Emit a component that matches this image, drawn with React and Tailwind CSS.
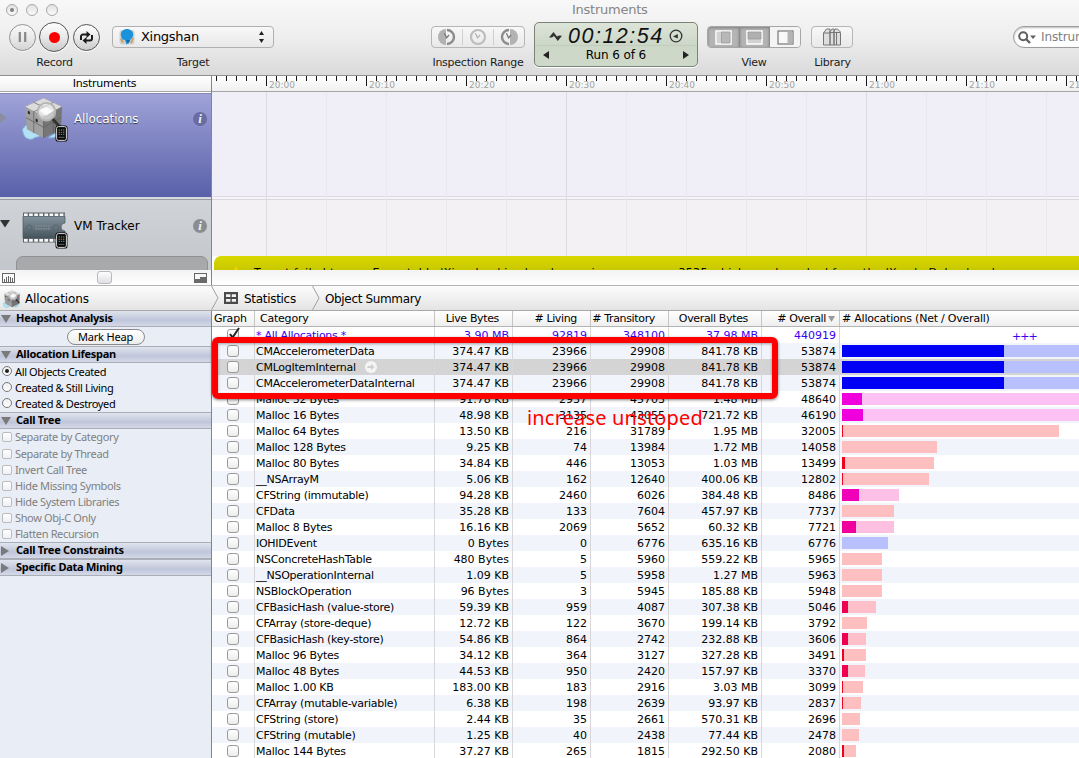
import React from "react";

const BLUE = ["bg-[#0000f5]", "bg-[#b8c1fd]"];
const MAGENTA = ["bg-[#f000dc]", "bg-[#fdc1f4]"];
const ORCHID = ["bg-[#f000b8]", "bg-[#fdc1e8]"];
const PINK = ["bg-[#f0009c]", "bg-[#fec0e0]"];
const ROSE = ["bg-[#f00050]", "bg-[#febfc8]"];
const RED = ["bg-[#f0001c]", "bg-[#febfc0]"];

const rows = [
  ["* All Allocations *", "3.90 MB", "92819", "348100", "37.98 MB", "440919"],
  ["CMAccelerometerData", "374.47 KB", "23966", "29908", "841.78 KB", "53874", 162, 300, BLUE],
  ["CMLogItemInternal", "374.47 KB", "23966", "29908", "841.78 KB", "53874", 162, 300, BLUE],
  ["CMAccelerometerDataInternal", "374.47 KB", "23966", "29908", "841.78 KB", "53874", 162, 300, BLUE],
  ["Malloc 32 Bytes", "91.78 KB", "2937", "45703", "1.48 MB", "48640", 20, 300, MAGENTA],
  ["Malloc 16 Bytes", "48.98 KB", "3135", "43055", "721.72 KB", "46190", 21, 300, MAGENTA],
  ["Malloc 64 Bytes", "13.50 KB", "216", "31789", "1.95 MB", "32005", 1, 217, RED],
  ["Malloc 128 Bytes", "9.25 KB", "74", "13984", "1.72 MB", "14058", 0, 95, RED],
  ["Malloc 80 Bytes", "34.84 KB", "446", "13053", "1.03 MB", "13499", 3, 91.5, RED],
  ["__NSArrayM", "5.06 KB", "162", "12640", "400.06 KB", "12802", 1, 87, RED],
  ["CFString (immutable)", "94.28 KB", "2460", "6026", "384.48 KB", "8486", 16.5, 57.3, ORCHID],
  ["CFData", "35.28 KB", "133", "7604", "457.97 KB", "7737", 0, 51.7, RED],
  ["Malloc 8 Bytes", "16.16 KB", "2069", "5652", "60.32 KB", "7721", 14, 52.3, PINK],
  ["IOHIDEvent", "0 Bytes", "0", "6776", "635.16 KB", "6776", 0, 46, BLUE],
  ["NSConcreteHashTable", "480 Bytes", "5", "5960", "559.22 KB", "5965", 0, 40.4, RED],
  ["__NSOperationInternal", "1.09 KB", "5", "5958", "1.27 MB", "5963", 0, 40.4, RED],
  ["NSBlockOperation", "96 Bytes", "3", "5945", "185.88 KB", "5948", 0, 40.4, RED],
  ["CFBasicHash (value-store)", "59.39 KB", "959", "4087", "307.38 KB", "5046", 6.4, 34, ROSE],
  ["CFArray (store-deque)", "12.72 KB", "122", "3670", "199.14 KB", "3792", 0, 25, RED],
  ["CFBasicHash (key-store)", "54.86 KB", "864", "2742", "232.88 KB", "3606", 6, 24.4, ROSE],
  ["Malloc 96 Bytes", "34.12 KB", "364", "3127", "327.28 KB", "3491", 2, 23.6, RED],
  ["Malloc 48 Bytes", "44.53 KB", "950", "2420", "157.97 KB", "3370", 6, 23, ROSE],
  ["Malloc 1.00 KB", "183.00 KB", "183", "2916", "3.03 MB", "3099", 1, 21, RED],
  ["CFArray (mutable-variable)", "6.38 KB", "198", "2639", "93.97 KB", "2837", 1, 19, RED],
  ["CFString (store)", "2.44 KB", "35", "2661", "570.31 KB", "2696", 0, 18, RED],
  ["CFString (mutable)", "1.25 KB", "40", "2438", "77.44 KB", "2478", 0, 16.7, RED],
  ["Malloc 144 Bytes", "37.27 KB", "265", "1815", "292.50 KB", "2080", 1.5, 14, RED],
];

function Label({ children }) {
  return <div className="whitespace-nowrap pt-px text-center text-[11px] leading-[14px] tracking-[-0.25px] text-[#1c1c1c]">{children}</div>;
}

function RoundButton({ size, children }) {
  return (
    <div className={`${size} flex shrink-0 items-center justify-center rounded-full border border-[#555] bg-gradient-to-b from-[#fdfdfd] via-[#e9e9e9] to-[#c9c9c9] shadow-[0_1px_0_#fff]`}>
      {children}
    </div>
  );
}

function Clock({ side }) {
  const c = side ? "#8c8c8c" : "#bdbdbd";
  return (
    <svg width="18" height="18" viewBox="0 0 18 18" fill="none" stroke={c}>
      {side === "left" && <path d="M8 1A8 8 0 0 0 8 17Z" fill="#b2b2b2" stroke="none" />}
      {side === "right" && <path d="M10 1A8 8 0 0 1 10 17Z" fill="#b2b2b2" stroke="none" />}
      {side === "left" ? <path d="M9 2A7 7 0 0 1 9 16" strokeWidth="2.4" /> : side === "right" ? <path d="M9 2A7 7 0 0 0 9 16" strokeWidth="2.4" /> : <circle cx="9" cy="9" r="7" strokeWidth="2.2" />}
      <path d="M6.4 5.2L8.6 9.8L11 7" strokeWidth="1.3" stroke={side ? "#777" : "#b4b4b4"} />
    </svg>
  );
}

function Phone() {
  return (
    <svg className="absolute bottom-0 right-0" width="13" height="17" viewBox="0 0 13 17">
      <rect x=".5" y=".5" width="12" height="16" rx="2.6" fill="#0b0b0b" />
      <rect x="1.6" y="1.6" width="9.8" height="13.8" rx="1.8" fill="#0b0b0b" stroke="#efefef" strokeWidth=".9" />
      <path d="M3.6 5h1.4M5.8 5h1.4M8 5h1.4" stroke="#6a5" strokeWidth="1.1" />
      <path d="M3.6 7.2h1.4M5.8 7.2h1.4M8 7.2h1.4" stroke="#c74" strokeWidth="1.1" />
      <path d="M3.6 9.4h1.4M5.8 9.4h1.4M8 9.4h1.4" stroke="#47a" strokeWidth="1.1" />
      <path d="M3.6 12.4h5.8" stroke="#555" strokeWidth="1.2" />
    </svg>
  );
}

function Cube({ size }) {
  return (
    <svg width={size} height={size} viewBox="0 0 44 44">
      <path d="M1 36c-2-4 2-5 3-7 3-1 3 3 6 2 4 0 4 5 9 7 0 4-6 2-8 5-4 1-9-1-10-7zM27 42c3-4 8-4 12-9 2 5-2 9-12 9z" fill="#b4e0f4" stroke="#78b4d4" strokeWidth=".8" />
      <path d="M22 1L41 10 22 20 3 10Z" fill="#dcdcdc" stroke="#aaa" strokeWidth=".6" />
      <path d="M3 10L22 20V42L5 33Z" fill="#a0a0a0" />
      <path d="M41 10L22 20V42L40 33Z" fill="#767676" />
      <path d="M12 5.5L32 15V38M32 5.5L12 15V37M4 21L22 31 40 21M22 20V42" stroke="#5c5c5c" strokeWidth=".7" fill="none" />
      <path d="M6 14l2 1v3l-2-1zM14 22l2 1v3l-2-1z" fill="#222" />
      <path d="M31 22L39 31" stroke="#333" strokeWidth="3" strokeLinecap="round" />
      <circle cx="25" cy="15" r="9" fill="#e8e8e8" fillOpacity=".7" stroke="#b4b4b4" strokeWidth="2" />
      <path d="M18 14l6-4 8 4-7 5z" fill="#fff" fillOpacity=".85" />
    </svg>
  );
}

function Chip() {
  return (
    <svg width="44" height="32" viewBox="0 0 44 32">
      <defs>
        <linearGradient id="chip" x1="0" y1="0" x2="0" y2="1">
          <stop offset="0" stopColor="#82929c" />
          <stop offset="1" stopColor="#44525b" />
        </linearGradient>
      </defs>
      <path d="M1 2.6h42M1 28.6h42" stroke="#5c6468" strokeWidth="4" />
      <path d="M2 3h41M2 28.2h41" stroke="#f8f8f8" strokeWidth="3.2" strokeDasharray="3.7 1.4" />
      <path d="M1 4.5H43V11a4 4 0 0 0 0 8V26.5H1Z" fill="url(#chip)" stroke="#4c5860" strokeWidth=".7" />
      <circle cx="7" cy="15.5" r="2.6" fill="#66747d" stroke="#55626a" strokeWidth=".8" />
      <circle cx="34" cy="15.5" r="2.6" fill="#66747d" stroke="#55626a" strokeWidth=".8" />
      <path d="M13 14h15M13 16.8h15" stroke="#83919a" strokeWidth="1.2" strokeDasharray="2 .6" />
    </svg>
  );
}

function Info({ tone }) {
  return (
    <div className={`flex h-[14px] w-[14px] items-center justify-center rounded-full ${tone}`}>
      <span className="font-['Liberation_Serif',serif] text-[13px] font-bold italic leading-[14px] text-[#f0f0f4]">i</span>
    </div>
  );
}

function Toolbar() {
  return (
    <header className="flex h-[76px] shrink-0 flex-col border-b border-[#8f8f8f] bg-gradient-to-b from-[#f8f8f8] via-[#eeeeee] to-[#dadada]">
      <div className="flex h-[19px] shrink-0 items-center pl-[6px]">
        <div className="flex gap-2">
          {[0, 1, 2].map((i) => (
            <div key={i} className="flex h-3 w-3 items-center justify-center rounded-full border border-[#a8a8a8] bg-gradient-to-b from-[#e2e2e2] to-[#fafafa]">
              {i === 0 && <div className="h-1 w-1 rounded-full bg-[#808080]" />}
            </div>
          ))}
        </div>
        <div className="ml-[514px] whitespace-nowrap text-[13px] leading-[18px] tracking-[-0.25px] text-[#858585]">Instruments</div>
      </div>
      <div className="flex shrink-0">
        <div className="ml-[8px] w-[93px]">
          <div className="flex h-[36px] items-center pl-px">
            <div className="opacity-60">
              <RoundButton size="w-[27px] h-[27px]">
                <svg width="10" height="10" viewBox="0 0 10 10"><path d="M1.8 0v10M7.2 0v10" stroke="#444" strokeWidth="2.2" /></svg>
              </RoundButton>
            </div>
            <div className="ml-[3px] mr-[4px]">
              <RoundButton size="w-[30px] h-[30px]">
                <div className="h-[11px] w-[11px] rounded-full bg-[#fa0000]" />
              </RoundButton>
            </div>
            <RoundButton size="w-[27px] h-[27px]">
              <svg width="15" height="13" viewBox="0 0 15 13" fill="none" stroke="#1a1a1a" strokeWidth="2">
                <path d="M2 9V5.5A2 2 0 0 1 4 3.5H8M13 4V7.5A2 2 0 0 1 11 9.5H7" />
                <path d="M7.5 0L11.5 3.5 7.5 7ZM7.5 6L3.5 9.5 7.5 13Z" fill="#1a1a1a" stroke="none" />
              </svg>
            </RoundButton>
          </div>
          <Label>Record</Label>
        </div>
        <div className="ml-[11px] w-[162px]">
          <div className="flex h-[36px] items-center">
            <div className="flex h-[22px] w-full items-center rounded-[4px] border border-[#b0b0b0] bg-gradient-to-b from-[#f8f8f8] to-[#e9e9e9] pl-[6px] pr-[9px]">
              <svg width="16" height="16" viewBox="0 0 16 16">
                <rect x=".5" y="1" width="15" height="14.5" rx="3" fill="#cfcfcb" />
                <path d="M2 9.5l2 4M14 9l-2 5" stroke="#c8a070" strokeWidth="2" />
                <path d="M2 7C1 2 5 0 8 0s7 2 6 7c-1 3-3 3-3 5 0 2-3 1-3 4-1-1-1-3-2-5C4 11 3 10 2 7z" fill="#1b92dc" />
                <path d="M7 11h4l-2 4z" fill="#0c6ab0" />
              </svg>
              <span className="ml-[6px] text-[13px] leading-[20px] tracking-[-0.3px] text-black">Xingshan</span>
              <svg className="ml-auto" width="5" height="12" viewBox="0 0 5 12"><path d="M2.5 0L5 4H0ZM2.5 12L5 8H0Z" fill="#222" /></svg>
            </div>
          </div>
          <Label>Target</Label>
        </div>
        <div className="ml-[157px] w-[94px]">
          <div className="flex h-[36px] items-center">
            <div className="flex h-[22px] w-full items-center rounded-[4px] border border-[#b6b6b6] bg-gradient-to-b from-[#f8f8f8] to-[#e9e9e9]">
              <div className="flex flex-1 justify-center"><Clock side="left" /></div>
              <div className="flex h-[16px] flex-1 items-center justify-center border-x border-[#cfcfcf]"><Clock /></div>
              <div className="flex flex-1 justify-center"><Clock side="right" /></div>
            </div>
          </div>
          <Label>Inspection Range</Label>
        </div>
        <div className="ml-[9px] mt-[3px] flex h-[45px] w-[164px] flex-col rounded-[5px] border border-[#7b8378] bg-gradient-to-b from-[#dce5d8] from-0% via-[#cdd7c8] via-50% to-[#cfd9c9] shadow-[0_1px_0_#fff]">
          <div className="flex h-[23px] shrink-0 items-center border-b border-[#c2ccbd] pt-[4px]">
            <svg className="ml-[14px]" width="13" height="9" viewBox="0 0 13 9"><path d="M0 5.5L4.5 0 8 4.5 10 3.5 13 3.8 8.8 9 5 4 3 5.5Z" fill="#333" /></svg>
            <div className="ml-[6px] flex w-[95px] font-['Liberation_Sans',sans-serif] text-[21.5px] italic leading-[20px] tracking-[1.5px] text-[#111]">00:12:54</div>
            <svg className="ml-[6px]" width="14" height="14" viewBox="0 0 14 14"><circle cx="7" cy="7" r="5.8" fill="none" stroke="#333" strokeWidth="1.3" /><path d="M4 7.5L8.8 5V9.5Z" fill="#333" /></svg>
          </div>
          <div className="flex h-[17px] items-center justify-between px-[8px]">
            <svg width="6" height="8" viewBox="0 0 6 8"><path d="M6 0V8L0 4Z" fill="#222" /></svg>
            <span className="text-[12px] leading-[16px] tracking-[-0.1px] text-black">Run 6 of 6</span>
            <svg width="6" height="8" viewBox="0 0 6 8"><path d="M0 0V8L6 4Z" fill="#222" /></svg>
          </div>
        </div>
        <div className="ml-[9px] w-[94px]">
          <div className="flex h-[36px] items-center">
            <div className="flex h-[22px] w-full overflow-hidden rounded-[4px] border border-[#a6a6a6]">
              <div className="flex w-[31px] items-center justify-center bg-[#b4b4b4] shadow-[inset_0_1px_3px_#808080]">
                <svg width="17" height="15" viewBox="0 0 17 15"><rect x="1" y="1" width="15" height="13" fill="#b5b5b5" stroke="#fff" strokeWidth="1.5" /><path d="M2 2h4v11H2z" fill="#d2d2d2" /><path d="M6.5 2h8.5v11H6.5z" fill="#b8b8b8" stroke="#999" strokeWidth=".7" /></svg>
              </div>
              <div className="flex w-[31px] items-center justify-center border-x border-[#8b8b8b] bg-[#b4b4b4] shadow-[inset_0_1px_3px_#808080]">
                <svg width="17" height="15" viewBox="0 0 17 15"><rect x="1" y="1" width="15" height="13" fill="#d2d2d2" stroke="#fff" strokeWidth="1.5" /><path d="M2 2h13v7H2z" fill="#b0b0b0" stroke="#999" strokeWidth=".7" /></svg>
              </div>
              <div className="flex flex-1 items-center justify-center bg-[#f4f4f4]">
                <svg width="17" height="15" viewBox="0 0 17 15"><rect x="1" y="1" width="15" height="13" fill="#f8f8f8" stroke="#777" strokeWidth="1.2" /><path d="M10.5 1.5h5v12h-5z" fill="#b4b4b4" /></svg>
              </div>
            </div>
          </div>
          <Label>View</Label>
        </div>
        <div className="ml-[10px] w-[43px]">
          <div className="flex h-[36px] items-center">
            <div className="flex h-[22px] w-[42px] items-center justify-center rounded-[4px] border border-[#b6b6b6] bg-gradient-to-b from-[#f8f8f8] to-[#e9e9e9]">
              <svg width="20" height="18" viewBox="0 0 20 18" fill="#dedede" stroke="#777" strokeWidth="1">
                <path d="M1.5 5L4.5 1H8V5M7.5 4.5L10 1H12V5M11.5 4.5L13 1H15.5L18.5 4" />
                <path d="M1.5 5H8V17H1.5ZM8 4.5H12V17H8ZM12 4.5H18.5V17H12ZM14.5 4.5V17" />
              </svg>
            </div>
          </div>
          <Label>Library</Label>
        </div>
        <div className="ml-[159px] flex h-[36px] w-[66px] items-center overflow-hidden">
          <div className="flex h-[22px] w-[120px] shrink-0 items-center rounded-full border border-[#9c9c9c] bg-white pl-[4px] shadow-[inset_0_1px_2px_#bbb]">
            <svg width="18" height="13" viewBox="0 0 18 13" fill="none" stroke="#606060"><circle cx="5.2" cy="5.2" r="4" strokeWidth="2" /><path d="M8 8L12 12" strokeWidth="2.4" /><path d="M12 4.5H18L15 8Z" fill="#606060" stroke="none" /></svg>
            <span className="ml-[5px] text-[12px] leading-[18px] tracking-[-0.1px] text-[#808080]">Instrument</span>
          </div>
        </div>
      </div>
    </header>
  );
}

function Ruler() {
  const ticks = Array.from({ length: 87 }, (_, i) => i);
  const labels = ["20:00", "20:10", "20:20", "20:30", "20:40", "20:50", "21:00", "21:10", "21:20"];
  return (
    <div className="relative h-[16px] shrink-0 overflow-hidden border-b border-[#a5a5a5] bg-gradient-to-b from-white to-[#f0f0f0]">
      <div className="flex pl-[57px]">
        {labels.map((l) => (
          <span key={l} className="w-[100px] shrink-0 pt-[3px] text-[9px] leading-[12px] text-[#a2a2a2]">{l}</span>
        ))}
      </div>
      <svg className="absolute left-0 top-0" width="867" height="12">
        {ticks.map((i) => (
          <rect key={i} x={4 + i * 10} y="0" width="1" height={(i - 5) % 10 === 0 ? 10 : 5} fill="#151515" />
        ))}
      </svg>
    </div>
  );
}

function TrackGrid() {
  return (
    <svg className="absolute left-0 top-0" width="867" height="178">
      {Array.from({ length: 15 }, (_, i) => (
        <rect key={i} x={54 + i * 60} y="0" width="1" height="178" fill={i % 5 === 0 ? "#dddbe1" : "#eae8ed"} />
      ))}
    </svg>
  );
}

function Tracks() {
  return (
    <div className="flex h-[194px] shrink-0">
      <div className="flex w-[212px] shrink-0 flex-col border-r border-[#858585]">
        <div className="h-[16px] shrink-0 border-b border-[#a5a5a5] bg-gradient-to-b from-white to-[#f0f0f0] pr-[2px] text-center text-[11px] leading-[15px] tracking-[-0.25px] text-black">Instruments</div>
        <div className="mt-px flex h-[104px] shrink-0 items-start border-t border-[#8586b5] bg-gradient-to-b from-[#a0a3d8] to-[#5a60a8]">
          <svg className="mt-[19px]" width="7" height="10" viewBox="0 0 7 10"><path d="M0 0L7 5 0 10Z" fill="#8c8ca0" /></svg>
          <div className="relative ml-[15px] mt-[3px] h-[45px] w-[46px]"><Cube size={43} /><Phone /></div>
          <span className="ml-[6px] mt-[17px] text-[12px] leading-[16px] tracking-[-0.1px] text-white [text-shadow:0_1px_1px_#334]">Allocations</span>
          <div className="ml-auto mr-[4px] mt-[18px]"><Info tone="bg-[#686ca0]" /></div>
        </div>
        <div className="h-[3px] shrink-0 border-b border-[#9c9ca0] bg-[#d4dae4]" />
        <div className="flex flex-1 flex-col overflow-hidden bg-gradient-to-b from-[#d0d3d7] to-[#c3c7cb]">
          <div className="flex items-start">
            <svg className="mt-[20px]" width="10" height="8" viewBox="0 0 10 8"><path d="M0 0H10L5 7.5Z" fill="#333" /></svg>
            <div className="relative ml-[12px] mt-[12px] h-[37px] w-[46px]"><Chip /><Phone /></div>
            <span className="ml-[6px] mt-[18px] text-[12px] leading-[16px] text-black">VM Tracker</span>
            <div className="ml-auto mr-[4px] mt-[19px]"><Info tone="bg-[#8a8d90]" /></div>
          </div>
          <div className="ml-[16px] mr-[3px] mt-[7px] h-[30px] shrink-0 rounded-[7px] border border-[#8e9193] bg-[#a8a9ab]" />
        </div>
      </div>
      <div className="flex min-w-0 flex-1 flex-col">
        <Ruler />
        <div className="relative flex flex-1 flex-col overflow-hidden">
          <div className="h-[105px] shrink-0 border-b border-[#dedbe6] bg-[#f0eef6]" />
          <div className="h-[3px] shrink-0 border-b border-[#dbd8dd] bg-[#f6f4f8]" />
          <div className="h-[56px] shrink-0 bg-[#f3f1f3]" />
          <TrackGrid />
          <div className="relative -mr-2 ml-[2px] h-[40px] shrink-0 rounded-[7px] bg-gradient-to-b from-[#d9d900] to-[#a8a800]">
            <div className="flex items-start pt-[10px]">
              <svg className="ml-[17px]" width="10" height="9" viewBox="0 0 10 9"><path d="M5 0L10 9H0Z" fill="#f2d000" /></svg>
              <span className="ml-[13px] whitespace-nowrap text-[11px] leading-[14px] tracking-[0.32px] text-black">Target failed to run. Executable 'Xingshan' is already running as process 3535 which was launched from the 'Xcode Debug' and</span>
            </div>
          </div>
        </div>
      </div>
    </div>
  );
}

function Strip() {
  return (
    <div className="flex h-[16px] shrink-0 border-b border-[#b4b4b4] bg-gradient-to-b from-[#f3f3f3] to-white">
      <div className="flex w-[212px] items-center border-r border-[#858585] pl-[2px] pr-[4px]">
        <svg width="13" height="10" viewBox="0 0 13 10" fill="none" stroke="#666"><rect x=".5" y=".5" width="12" height="9" fill="#fafafa" /><path d="M2.5 9V6M4.5 9V4M6.5 9V3M8.5 9V4M10.5 9V5" /></svg>
        <div className="ml-[82px] h-[13px] w-[15px] rounded-[3px] border-[1.5px] border-[#b8b8c0] bg-gradient-to-b from-[#fdfdfd] to-[#e0e0e4]" />
        <svg className="ml-auto" width="13" height="10" viewBox="0 0 13 10"><rect x=".5" y=".5" width="12" height="9" fill="#f6f6f6" stroke="#666" /><path d="M0 6H6V4H13V10H0Z" fill="#6a6a6a" /></svg>
      </div>
    </div>
  );
}

function Chevron() {
  return <svg className="shrink-0" width="8" height="24" viewBox="0 0 8 24"><path d="M.5 0L7 12 .5 24" fill="none" stroke="#a0a0a0" /></svg>;
}

function Breadcrumb() {
  return (
    <div className="flex h-[25px] shrink-0 items-center border-b border-[#a9a9a9] bg-gradient-to-b from-[#fcfcfc] from-0% via-[#f0f0f0] via-50% to-[#e4e4e4] text-[12px] leading-[16px] text-black">
      <div className="flex w-[211px] shrink-0 items-center pl-[3px] pt-px">
        <Cube size={18} />
        <span className="ml-[4px] tracking-[-0.15px]">Allocations</span>
      </div>
      <Chevron />
      <svg className="ml-[5px]" width="14" height="12" viewBox="0 0 14 12"><rect width="14" height="12" fill="#4a4a4a" /><path d="M2 2.2h4.4v2.8H2zM7.8 2.2h4.2v2.8H7.8zM2 7h4.4v2.8H2zM7.8 7h4.2v2.8H7.8z" fill="#f2f2f2" /></svg>
      <span className="ml-[6px] w-[68px] pt-px tracking-[-0.3px]">Statistics</span>
      <Chevron />
      <span className="ml-[5px] pt-px tracking-[-0.35px]">Object Summary</span>
    </div>
  );
}

function SectionHead({ open, children }) {
  return (
    <div className="flex h-[16px] shrink-0 items-start border-b border-[#aaaeb6] bg-gradient-to-b from-[#e0e4ee] from-0% via-[#c0c6da] via-60% to-[#d4d9e8]">
      <div className="flex h-[15px] w-[16px] items-center pl-px">
        {open ? (
          <svg width="10" height="8" viewBox="0 0 10 8"><path d="M0 0H10L5 8Z" fill="#7a7a7a" /></svg>
        ) : (
          <svg width="8" height="10" viewBox="0 0 8 10"><path d="M0 0L8 5 0 10Z" fill="#7a7a7a" /></svg>
        )}
      </div>
      <span className="whitespace-nowrap font-['Noto_Sans',sans-serif] text-[11px] font-bold leading-[13px] tracking-[-0.25px] text-black">{children}</span>
    </div>
  );
}

function Sidebar() {
  return (
    <aside className="flex w-[212px] shrink-0 flex-col border-r border-[#858585] bg-[#e9eef6] font-['Noto_Sans',sans-serif] text-[11px] tracking-[-0.36px]">
      <SectionHead open>Heapshot Analysis</SectionHead>
      <div className="flex h-[20px] justify-center border-b border-[#aaaeb6] pt-[2px]">
        <div className="h-[16px] w-[78px] rounded-full border border-[#8a8a8a] bg-gradient-to-b from-white to-[#ececec] text-center leading-[14px] tracking-[-0.2px]">Mark Heap</div>
      </div>
      <SectionHead open>Allocation Lifespan</SectionHead>
      <div className="flex h-[50px] flex-col border-b border-[#aaaeb6]">
        {["All Objects Created", "Created & Still Living", "Created & Destroyed"].map((t, i) => (
          <div key={t} className="flex h-[16px] items-center pl-[2px]">
            <div className="flex h-[10px] w-[10px] items-center justify-center rounded-full border border-[#777] bg-gradient-to-b from-[#eee] to-white">
              {i === 0 && <div className="h-[4px] w-[4px] rounded-full bg-[#222]" />}
            </div>
            <span className="ml-[3px] pt-px leading-[15px] text-black">{t}</span>
          </div>
        ))}
      </div>
      <SectionHead open>Call Tree</SectionHead>
      <div className="flex h-[114px] flex-col border-b border-[#aaaeb6]">
        {["Separate by Category", "Separate by Thread", "Invert Call Tree", "Hide Missing Symbols", "Hide System Libraries", "Show Obj-C Only", "Flatten Recursion"].map((t) => (
          <div key={t} className="flex h-[16px] shrink-0 items-center pl-[2px] first:mb-px">
            <div className="h-[10px] w-[10px] rounded-[2px] border border-[#bcbcbc] bg-gradient-to-b from-white to-[#eef0f4]" />
            <span className="ml-[3px] pb-px leading-[15px] text-[#808080]">{t}</span>
          </div>
        ))}
      </div>
      <SectionHead>Call Tree Constraints</SectionHead>
      <div className="h-px shrink-0 bg-[#aaaeb6]" />
      <SectionHead>Specific Data Mining</SectionHead>
    </aside>
  );
}

const cell = "shrink-0 border-r border-[#d9d6da]";
const num = `${cell} pr-[3px] text-right`;
const head = "shrink-0 border-r border-[#c4c4c4] pr-[13px] text-right tracking-[-0.35px]";

function Row({ r, i }) {
  const bg = i === 2 ? "bg-[#d4d4d4]" : i % 2 ? "bg-[#f1f5fb]" : "bg-white";
  const color = i === 0 ? "text-[#3a00f0]" : "text-black";
  return (
    <div className={`flex h-[16px] shrink-0 whitespace-nowrap leading-[18px] ${bg} ${color}`}>
      <div className={`${cell} flex w-[43px] items-center pl-[15px]`}>
        <div className="h-[12px] w-[12px] rounded-[3px] border border-[#9a9a9a] bg-gradient-to-b from-white to-[#ececec]">
          {i === 0 && <svg className="-mt-[3px]" width="13" height="12" viewBox="0 0 13 12"><path d="M2 7L4.5 10.5 11 1" fill="none" stroke="#222" strokeWidth="2" /></svg>}
        </div>
      </div>
      <div className={`${cell} flex w-[180px] items-start pl-[1px] tracking-[-0.27px]`}>
        {r[0]}
        {i === 2 && (
          <svg className="ml-[9px] mt-[2px]" width="12" height="12" viewBox="0 0 12 12"><circle cx="6" cy="6" r="6" fill="#f4f4f4" /><path d="M2.5 5H6V2.8L9.5 6 6 9.2V7H2.5Z" fill="#d0d0d0" /></svg>
        )}
      </div>
      <div className={`${num} w-[78px]`}>{r[1]}</div>
      <div className={`${num} w-[78px]`}>{r[2]}</div>
      <div className={`${num} w-[78px]`}>{r[3]}</div>
      <div className={`${num} w-[93px]`}>{r[4]}</div>
      <div className={`${num} w-[78px]`}>{r[5]}</div>
      <div className="flex min-w-0 flex-1 items-center overflow-hidden pl-[2px]">
        {i === 0 ? (
          <span className="ml-[170px] pt-[3px] tracking-[-1px]">+++</span>
        ) : (
          <div className={`flex h-[12px] shrink-0 ${r[8][1]}`} style={{ width: r[7] }}>
            <div className={r[8][0]} style={{ width: r[6] }} />
          </div>
        )}
      </div>
    </div>
  );
}

function Table() {
  return (
    <section className="relative flex min-w-0 flex-1 flex-col bg-white text-[11px]">
      <div className="flex h-[16px] shrink-0 whitespace-nowrap border-b border-[#b4b4b4] bg-gradient-to-b from-white to-[#efefef] leading-[15px] tracking-[-0.22px] text-black">
        <div className="w-[43px] shrink-0 border-r border-[#c4c4c4] pl-[2px]">Graph</div>
        <div className="w-[180px] shrink-0 border-r border-[#c4c4c4] pl-[5px]">Category</div>
        <div className={`${head} w-[78px]`}>Live Bytes</div>
        <div className={`${head} w-[78px]`}># Living</div>
        <div className={`${head} w-[78px]`}># Transitory</div>
        <div className={`${head} w-[93px]`}>Overall Bytes</div>
        <div className="flex w-[78px] shrink-0 items-center justify-end gap-[2px] border-r border-[#c4c4c4] pr-[4px] tracking-[-0.35px]">
          # Overall
          <svg width="7" height="6" viewBox="0 0 7 6"><path d="M0 0H7L3.5 6Z" fill="#999" /></svg>
        </div>
        <div className="pl-[2px]"># Allocations (Net / Overall)</div>
      </div>
      {rows.map((r, i) => <Row key={i} r={r} i={i} />)}
      <div className="absolute left-0 top-[26px] h-[62px] w-[566px] rounded-[6px] border-[6px] border-[#fe0000] shadow-[0_1px_3px_rgba(0,0,0,.5),inset_0_1px_3px_rgba(0,0,0,.35)]" />
      <div className="absolute left-[315px] top-[95px] whitespace-nowrap font-['Noto_Sans',sans-serif] text-[20px] leading-[24px] tracking-[0.17px] text-[#fe0000]">increase unstoped</div>
    </section>
  );
}

export default function App() {
  return (
    <div className="flex h-[758px] w-[1079px] flex-col overflow-hidden bg-white font-['DejaVu_Sans',sans-serif]">
      <Toolbar />
      <Tracks />
      <Strip />
      <Breadcrumb />
      <div className="flex min-h-0 flex-1 overflow-hidden">
        <Sidebar />
        <Table />
      </div>
    </div>
  );
}
